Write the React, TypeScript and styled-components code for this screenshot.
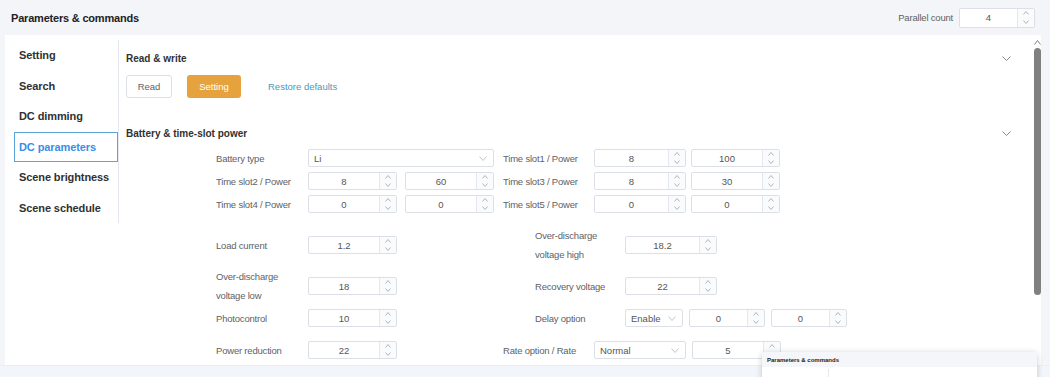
import React from 'react';
import styled, { createGlobalStyle } from 'styled-components';

const GlobalStyle = createGlobalStyle`
  html, body {
    margin: 0;
    padding: 0;
  }
  body {
    background: #f3f5f9;
    font-family: "Liberation Sans", Arial, sans-serif;
    color: #606266;
  }
`;

const Page = styled.div`
  width: 1050px;
  height: 377px;
  position: relative;
  overflow: hidden;
  display: flex;
  flex-direction: column;
`;

const Header = styled.header`
  height: 35px;
  flex: none;
  display: flex;
  align-items: center;
  justify-content: space-between;
  padding: 0 15px 0 11px;
`;

const Title = styled.h1`
  margin: 0;
  font-size: 11px;
  font-weight: bold;
  letter-spacing: -0.2px;
  color: #222;
`;

const HeaderRight = styled.div`
  display: flex;
  align-items: center;
  gap: 6px;
`;

const Panel = styled.div`
  margin-left: 5px;
  width: 1036px;
  height: 330px;
  flex: none;
  display: flex;
  background: #fff;
`;

const Scroll = styled.div`
  flex: 1;
  height: 100%;
  overflow: hidden;
  display: flex;
  align-items: flex-start;
`;

/* drawn scrollbar, the headless shot hides the native one */
const ScrollTrack = styled.div`
  width: 8px;
  flex: none;
  display: flex;
  flex-direction: column;
  align-items: center;
  padding-top: 5px;
`;

const ScrollThumb = styled.div<{ $h: number }>`
  width: 7px;
  height: ${p => p.$h}px;
  margin-top: 3px;
  border-radius: 4px;
  background: #808080;
`;

const Nav = styled.nav`
  width: 114px;
  flex: none;
  box-sizing: border-box;
  margin-top: 5px;
  padding-left: 9px;
  border-right: 1px solid #e4e7ed;
`;

const NavItem = styled.div<{ $active?: boolean }>`
  height: 30.5px;
  box-sizing: border-box;
  display: flex;
  align-items: center;
  padding-left: 4px;
  border: 1px solid ${p => (p.$active ? '#5aa5dc' : 'transparent')};
  font-size: 11px;
  font-weight: bold;
  letter-spacing: -0.1px;
  color: ${p => (p.$active ? '#3a8ee6' : '#303133')};
`;

const Content = styled.div`
  flex: 1;
  padding: 15px 22px 0 7px;
`;

const SectionHead = styled.div<{ $top?: number }>`
  height: 16px;
  margin-top: ${p => p.$top ?? 0}px;
  display: flex;
  align-items: center;
  justify-content: space-between;
`;

const SectionTitle = styled.h2`
  margin: 0;
  font-size: 10px;
  font-weight: bold;
  color: #303133;
`;

const Actions = styled.div`
  margin-top: 9px;
  display: flex;
  align-items: center;
`;

const Button = styled.button<{ $w: number; $kind?: 'plain' | 'warning' | 'link'; $ml?: number }>`
  height: 23px;
  width: ${p => (p.$kind === 'link' ? 'auto' : `${p.$w}px`)};
  margin-left: ${p => p.$ml ?? 0}px;
  padding: 0;
  box-sizing: border-box;
  border-radius: 3px;
  font-family: inherit;
  font-size: 9.5px;
  border: 1px solid ${p => (p.$kind === 'plain' ? '#dcdfe6' : 'transparent')};
  background: ${p => (p.$kind === 'warning' ? '#e6a23c' : '#fff')};
  color: ${p => (p.$kind === 'warning' ? '#fff' : p.$kind === 'link' ? '#4a98bd' : '#606266')};
`;

const Form = styled.div<{ $top: number }>`
  margin-top: ${p => p.$top}px;
  padding-left: 90px;
`;

const SlotRow = styled.div`
  height: 23px;
  display: grid;
  grid-template-columns: 92px 195px 91px 187px;
  align-items: center;
`;

const Pair = styled.div`
  width: 186px;
  display: flex;
  justify-content: space-between;
`;

const Label = styled.span<{ $w?: number }>`
  display: block;
  width: ${p => (p.$w ? `${p.$w}px` : 'auto')};
  flex: none;
  font-size: 9.5px;
  letter-spacing: -0.2px;
  line-height: 19px;
  color: #606266;
`;

const ParamRow = styled.div<{ $h: number }>`
  height: ${p => p.$h}px;
  display: flex;
  align-items: center;
`;

const Half = styled.div<{ $w?: number; $indent?: number }>`
  width: ${p => (p.$w ? `${p.$w}px` : 'auto')};
  flex: none;
  box-sizing: border-box;
  padding-left: ${p => p.$indent ?? 0}px;
  display: flex;
  align-items: center;
  gap: 6px;
`;

const LabelCell = styled.div<{ $w: number }>`
  width: ${p => p.$w}px;
  flex: none;
  margin-right: -6px;
`;

const NumBox = styled.div<{ $w: number; $h: number }>`
  width: ${p => p.$w}px;
  height: ${p => p.$h}px;
  flex: none;
  box-sizing: border-box;
  display: flex;
  border: 1px solid #dcdfe6;
  border-radius: 2px;
  background: #fff;
  overflow: hidden;
`;

const NumValue = styled.span`
  flex: 1;
  display: flex;
  align-items: center;
  justify-content: center;
  font-size: 9.5px;
  color: #555;
`;

const Spin = styled.span`
  width: 16px;
  flex: none;
  display: flex;
  flex-direction: column;
  border-left: 1px solid #e4e7ed;
  background: #fafbfc;
`;

const SpinHalf = styled.span`
  flex: 1;
  display: flex;
  align-items: center;
  justify-content: center;
`;

const SelectBox = styled.div<{ $w: number }>`
  width: ${p => p.$w}px;
  height: 18px;
  flex: none;
  box-sizing: border-box;
  display: flex;
  align-items: center;
  justify-content: space-between;
  padding: 0 6px 0 5px;
  border: 1px solid #dcdfe6;
  border-radius: 2px;
  font-size: 9.5px;
  color: #555;
`;

const Footer = styled.div`
  flex: 1;
  background: #f2f5fa;
  border-top: 1px solid #eceef2;
`;

const Preview = styled.div`
  position: absolute;
  left: 762px;
  top: 352px;
  width: 275px;
  height: 40px;
  background: #fff;
  border-radius: 3px;
  box-shadow: 0 1px 6px rgba(0, 0, 0, 0.2);
  overflow: hidden;
`;

const PreviewHead = styled.div`
  height: 15px;
  display: flex;
  align-items: center;
  padding-left: 5px;
  background: #f4f6fa;
  font-size: 6px;
  font-weight: bold;
  color: #222;
`;

const PreviewNav = styled.div`
  width: 66px;
  height: 20px;
  margin-top: 2px;
  border-right: 1px solid #e4e7ed;
`;

const Chevron: React.FC<{ dir?: 'up' | 'down'; w?: number; h?: number; color?: string }> = ({
  dir = 'down',
  w = 6,
  h = 3,
  color = '#b4b4b4',
}) => (
  <svg width={w} height={h + 1} viewBox={`0 0 ${w} ${h + 1}`}>
    <polyline
      points={
        dir === 'down'
          ? `0.5,0.5 ${w / 2},${h + 0.5} ${w - 0.5},0.5`
          : `0.5,${h + 0.5} ${w / 2},0.5 ${w - 0.5},${h + 0.5}`
      }
      fill="none"
      stroke={color}
      strokeWidth="1"
    />
  </svg>
);

const NumberInput: React.FC<{ value: string; w: number; h?: number }> = ({ value, w, h = 18 }) => (
  <NumBox $w={w} $h={h}>
    <NumValue>{value}</NumValue>
    <Spin>
      <SpinHalf><Chevron dir="up" /></SpinHalf>
      <SpinHalf><Chevron dir="down" /></SpinHalf>
    </Spin>
  </NumBox>
);

const Select: React.FC<{ value: string; w: number }> = ({ value, w }) => (
  <SelectBox $w={w}>
    <span>{value}</span>
    <Chevron w={8} h={4} color="#c0c4cc" />
  </SelectBox>
);

const navItems = ['Setting', 'Search', 'DC dimming', 'DC parameters', 'Scene brightness', 'Scene schedule'];

const slots = [
  { left: 'Time slot2 / Power', lv: ['8', '60'], right: 'Time slot3 / Power', rv: ['8', '30'] },
  { left: 'Time slot4 / Power', lv: ['0', '0'], right: 'Time slot5 / Power', rv: ['0', '0'] },
];

const App: React.FC = () => {
  return (
    <Page>
      <GlobalStyle />
      <Header>
        <Title>Parameters &amp; commands</Title>
        <HeaderRight>
          <Label>Parallel count</Label>
          <NumberInput value="4" w={76} h={20} />
        </HeaderRight>
      </Header>

      <Panel>
        <Scroll>
          <Nav>
            {navItems.map(item => (
              <NavItem key={item} $active={item === 'DC parameters'}>{item}</NavItem>
            ))}
          </Nav>

          <Content>
            <SectionHead>
              <SectionTitle>Read &amp; write</SectionTitle>
              <Chevron w={9} h={4} color="#888" />
            </SectionHead>
            <Actions>
              <Button $w={46} $kind="plain">Read</Button>
              <Button $w={54} $kind="warning" $ml={15}>Setting</Button>
              <Button $w={0} $kind="link" $ml={26}>Restore defaults</Button>
            </Actions>

            <SectionHead $top={27}>
              <SectionTitle>Battery &amp; time-slot power</SectionTitle>
              <Chevron w={9} h={4} color="#888" />
            </SectionHead>

            <Form $top={5.5}>
              <SlotRow>
                <Label>Battery type</Label>
                <Select value="Li" w={186} />
                <Label>Time slot1 / Power</Label>
                <Pair>
                  <NumberInput value="8" w={92} />
                  <NumberInput value="100" w={89} />
                </Pair>
              </SlotRow>
              {slots.map(s => (
                <SlotRow key={s.left}>
                  <Label>{s.left}</Label>
                  <Pair>
                    <NumberInput value={s.lv[0]} w={89} />
                    <NumberInput value={s.lv[1]} w={89} />
                  </Pair>
                  <Label>{s.right}</Label>
                  <Pair>
                    <NumberInput value={s.rv[0]} w={92} />
                    <NumberInput value={s.rv[1]} w={89} />
                  </Pair>
                </SlotRow>
              ))}
            </Form>

            <Form $top={10.5}>
              <ParamRow $h={38}>
                <Half $w={287}>
                  <LabelCell $w={92}><Label>Load current</Label></LabelCell>
                  <NumberInput value="1.2" w={89} />
                </Half>
                <Half $indent={32}>
                  <LabelCell $w={90}><Label $w={68}>Over-discharge voltage high</Label></LabelCell>
                  <NumberInput value="18.2" w={92} />
                </Half>
              </ParamRow>
              <ParamRow $h={44}>
                <Half $w={287}>
                  <LabelCell $w={92}><Label $w={68}>Over-discharge voltage low</Label></LabelCell>
                  <NumberInput value="18" w={89} />
                </Half>
                <Half $indent={32}>
                  <LabelCell $w={90}><Label>Recovery voltage</Label></LabelCell>
                  <NumberInput value="22" w={92} />
                </Half>
              </ParamRow>
              <ParamRow $h={20}>
                <Half $w={287}>
                  <LabelCell $w={92}><Label>Photocontrol</Label></LabelCell>
                  <NumberInput value="10" w={89} />
                </Half>
                <Half $indent={32}>
                  <LabelCell $w={90}><Label>Delay option</Label></LabelCell>
                  <Select value="Enable" w={58} />
                  <NumberInput value="0" w={76} />
                  <NumberInput value="0" w={76} />
                </Half>
              </ParamRow>
              <ParamRow $h={44}>
                <Half $w={287}>
                  <LabelCell $w={92}><Label>Power reduction</Label></LabelCell>
                  <NumberInput value="22" w={89} />
                </Half>
                <Half>
                  <LabelCell $w={91}><Label>Rate option / Rate</Label></LabelCell>
                  <Select value="Normal" w={92} />
                  <NumberInput value="5" w={89} />
                </Half>
              </ParamRow>
            </Form>
          </Content>
        </Scroll>
        <ScrollTrack>
          <Chevron dir="up" w={7} h={4} color="#808080" />
          <ScrollThumb $h={247} />
        </ScrollTrack>
      </Panel>

      <Footer />

      <Preview>
        <PreviewHead>Parameters &amp; commands</PreviewHead>
        <PreviewNav />
      </Preview>
    </Page>
  );
};

export default App;
